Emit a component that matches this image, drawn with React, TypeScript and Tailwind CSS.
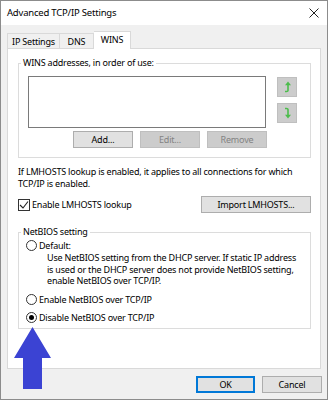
import React from "react";

// Windows "Advanced TCP/IP Settings" dialog, WINS tab.

const font = { fontFamily: '"Noto Sans", "Open Sans", sans-serif' };

function Btn({ label, w, disabled, primary }: { label: string; w: string; disabled?: boolean; primary?: boolean }) {
  const cls = disabled
    ? "bg-[#cccccc] border-[#bfbfbf] text-[#838383]"
    : primary
    ? "bg-[#e1e1e1] border-[#0078d7] text-black"
    : "bg-[#e1e1e1] border-[#adadad] text-black";
  return (
    <div className={`${w} h-[17px] border ${cls} flex items-center justify-center leading-none`}>
      {label}
    </div>
  );
}

function Radio({ checked }: { checked?: boolean }) {
  return (
    <div className="w-[11px] h-[11px] rounded-full border border-[#333333] bg-white flex items-center justify-center shrink-0">
      {checked && <div className="w-[5px] h-[5px] rounded-full bg-black" />}
    </div>
  );
}

function MoveIcon({ down }: { down?: boolean }) {
  return (
    <svg width="8" height="12" viewBox="0 0 8 12" className={down ? "-scale-y-100" : ""}>
      <path d="M5 3 V9.5 Q5 10.5 3.5 10.5 H2" stroke="#4cbd4c" strokeWidth="1.6" fill="none" />
      <polygon points="5,0.5 8,4.2 2,4.2" fill="#4cbd4c" />
    </svg>
  );
}

function GroupBox({ label, className, children }: { label: string; className: string; children?: React.ReactNode }) {
  return (
    <div className={`border border-[#dcdcdc] ${className}`}>
      <span className="block w-fit -mt-[7px] ml-[2px] px-[2px] bg-white leading-[12px]">{label}</span>
      {children}
    </div>
  );
}

export default function App() {
  return (
    <div style={font} className="w-[328px] h-[400px] border border-[#8c8c8c] bg-[#f0f0f0] flex flex-col text-[9px] tracking-[-0.2px] text-black relative overflow-hidden">
      {/* title bar */}
      <div className="h-[24px] bg-white flex items-center justify-between pl-[6px] pr-[8px] shrink-0">
        <span className="text-[9.5px] leading-none">Advanced TCP/IP Settings</span>
        <svg width="10" height="10" viewBox="0 0 10 10">
          <path d="M0.5 0.5 L9.5 9.5 M9.5 0.5 L0.5 9.5" stroke="#222" strokeWidth="1" />
        </svg>
      </div>

      {/* tabs */}
      <div className="flex items-end h-[23px] pl-[6px] shrink-0">
        <div className="w-[53px] h-[15px] border border-b-0 border-[#d9d9d9] bg-[#f0f0f0] flex items-center justify-center leading-none">IP Settings</div>
        <div className="w-[34px] h-[15px] border border-l-0 border-b-0 border-[#d9d9d9] bg-[#f0f0f0] flex items-center justify-center leading-none">DNS</div>
        <div className="w-[37px] h-[18px] -mb-px border border-l-0 border-b-0 border-[#d9d9d9] bg-white relative z-10 flex items-center justify-center leading-none pb-[2px]">WINS</div>
      </div>

      {/* tab panel */}
      <div className="ml-[6px] w-[314px] h-[321px] border border-[#d9d9d9] bg-white shrink-0 flex flex-col">
        <GroupBox label="WINS addresses, in order of use:" className="ml-[10px] mt-[14px] w-[293px] h-[95px]">
          <div className="flex mt-[7px] ml-[9px]">
            <div className="w-[238px] h-[52px] border border-[#7a7a7a] bg-white" />
            <div className="ml-[11px] mt-[1px] flex flex-col gap-[6px]">
              <div className="w-[20px] h-[20px] bg-[#cccccc] border border-[#bfbfbf] flex items-center justify-center"><MoveIcon /></div>
              <div className="w-[20px] h-[20px] bg-[#cccccc] border border-[#bfbfbf] flex items-center justify-center"><MoveIcon down /></div>
            </div>
          </div>
          <div className="flex gap-[7px] ml-[54px] mt-[3px]">
            <Btn label="Add..." w="w-[60px]" />
            <Btn label="Edit..." w="w-[60px]" disabled />
            <Btn label="Remove" w="w-[60px]" disabled />
          </div>
        </GroupBox>

        <p className="ml-[10px] mt-[8px] leading-[12px] w-[290px]">
          If LMHOSTS lookup is enabled, it applies to all connections for which TCP/IP is enabled.
        </p>

        <div className="flex items-center ml-[10px] mt-[6px] h-[17px]">
          <div className="w-[12px] h-[12px] border border-[#333333] bg-white flex items-center justify-center">
            <svg width="10" height="10" viewBox="0 0 10 10">
              <path d="M1 5 L4 8 L9 1.5" stroke="#222" strokeWidth="1.1" fill="none" />
            </svg>
          </div>
          <span className="ml-[2px]">Enable LMHOSTS lookup</span>
          <div className="ml-auto mr-[9px]">
            <Btn label="Import LMHOSTS..." w="w-[110px]" />
          </div>
        </div>

        <GroupBox label="NetBIOS setting" className="ml-[10px] mt-[19px] w-[293px] h-[97px]">
          <div className="ml-[7px] mt-[1px]">
            <div className="flex items-center gap-[2px] h-[12px]">
              <Radio />
              <span className="leading-none">Default:</span>
            </div>
            <p className="ml-[21px] leading-[11.5px] mt-[1px] w-[252px]">
              Use NetBIOS setting from the DHCP server. If static IP address is used or the DHCP server does not provide NetBIOS setting, enable NetBIOS over TCP/IP.
            </p>
            <div className="flex items-center gap-[2px] h-[12px] mt-[7px]">
              <Radio />
              <span className="leading-none">Enable NetBIOS over TCP/IP</span>
            </div>
            <div className="flex items-center gap-[2px] h-[12px] mt-[6px]">
              <Radio checked />
              <span className="leading-none">Disable NetBIOS over TCP/IP</span>
            </div>
          </div>
        </GroupBox>
      </div>

      {/* footer buttons */}
      <div className="flex justify-end gap-[7px] mt-[7px] pr-[5px]">
        <div className="border border-[#0078d7]">
          <div className="w-[57px] h-[15px] bg-[#e1e1e1] border border-[#0078d7] flex items-center justify-center leading-none">OK</div>
        </div>
        <Btn label="Cancel" w="w-[60px]" />
      </div>

      {/* annotation arrow */}
      <svg className="absolute left-[12px] top-[326px]" width="39" height="62" viewBox="0 0 39 62">
        <polygon points="19.5,0 38,31 29,31 29,62 10,62 10,31 1,31" fill="#3b43d3" />
      </svg>
    </div>
  );
}
